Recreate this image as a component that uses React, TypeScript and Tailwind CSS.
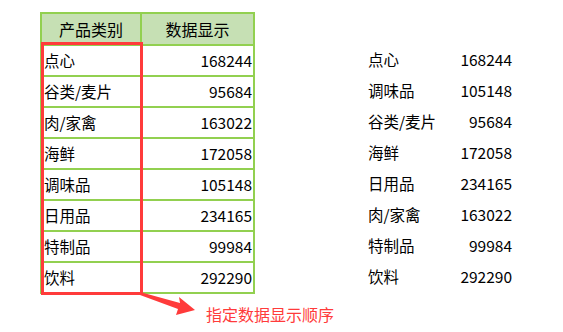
const rows: [string, string][] = [
  ["点心", "168244"],
  ["谷类/麦片", "95684"],
  ["肉/家禽", "163022"],
  ["海鲜", "172058"],
  ["调味品", "105148"],
  ["日用品", "234165"],
  ["特制品", "99984"],
  ["饮料", "292290"],
];

const sorted: [string, string][] = [
  ["点心", "168244"],
  ["调味品", "105148"],
  ["谷类/麦片", "95684"],
  ["海鲜", "172058"],
  ["日用品", "234165"],
  ["肉/家禽", "163022"],
  ["特制品", "99984"],
  ["饮料", "292290"],
];

export default function App() {
  return (
    <div
      className="relative w-[563px] h-[332px] bg-white text-black text-[15.5px] leading-none"
      style={{ fontFamily: '"Microsoft YaHei", "Noto Sans CJK SC", sans-serif' }}
    >
      <div className="flex pt-[12px] pl-[40px]">
        {/* source table */}
        <div className="w-[215px] border-2 border-[#92d050]">
          <div className="flex h-[30px] bg-[#c6e0b4] text-[16px]">
            <div className="w-[100px] border-r-2 border-[#92d050] flex items-center justify-center">产品类别</div>
            <div className="flex-1 flex items-center justify-center">数据显示</div>
          </div>
          {rows.map(([name, value]) => (
            <div key={name} className="flex h-[31px] border-t-2 border-[#92d050]">
              <div className="w-[100px] border-r-2 border-[#92d050] flex items-center pl-[2px]">{name}</div>
              <div className="flex-1 flex items-center justify-end pr-[1px]">{value}</div>
            </div>
          ))}
        </div>

        {/* ordered result */}
        <div className="ml-[113px] mt-[32px] w-[144px]">
          {sorted.map(([name, value]) => (
            <div key={name} className="flex h-[31px] items-center justify-between">
              <span>{name}</span>
              <span>{value}</span>
            </div>
          ))}
        </div>
      </div>

      {/* red highlight box */}
      <div className="absolute left-[41px] top-[42px] w-[102px] h-[253px] border-[3px] border-[#ff3b3b]" />

      {/* arrow */}
      <svg className="absolute left-[138px] top-[288px]" width="62" height="32" viewBox="0 0 62 32">
        <polygon points="2,4 42,15 41,9 57,22 38,27 40,21 2,7" fill="#ff3b3b" />
      </svg>

      <div className="absolute left-[206px] top-[306px] text-[#ff3b3b] text-[16px]">指定数据显示顺序</div>
    </div>
  );
}
